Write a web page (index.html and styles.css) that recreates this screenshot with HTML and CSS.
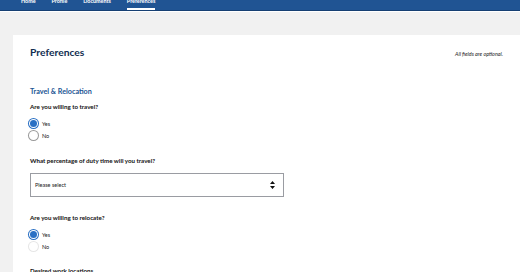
FILE: index.html
```html
<!DOCTYPE html>
<html>
<head>
<meta charset="utf-8">
<link rel="stylesheet" href="styles.css">
</head>
<body>
<nav class="topnav">
  <a class="tab">Home</a>
  <a class="tab">Profile</a>
  <a class="tab">Documents</a>
  <a class="tab active">Preferences</a>
</nav>
<main class="page">
  <section class="card">
    <header class="card-head">
      <h1 class="title">Preferences</h1>
      <p class="note">All fields are optional.</p>
    </header>
    <h2 class="section-title">Travel &amp; Relocation</h2>

    <div class="question q1">
      <p class="label">Are you willing to travel?</p>
      <div class="options">
        <label class="opt"><span class="radio checked"></span>Yes</label>
        <label class="opt"><span class="radio"></span>No</label>
      </div>
    </div>

    <div class="question q2">
      <p class="label">What percentage of duty time will you travel?</p>
      <div class="select">
        <span>Please select</span>
        <svg class="arrows" width="5" height="8" viewBox="0 0 5 8"><path d="M2.5 0 L5 3 L0 3 Z M2.5 8 L5 5 L0 5 Z" fill="#111"/></svg>
      </div>
    </div>

    <div class="question q3">
      <p class="label">Are you willing to relocate?</p>
      <div class="options">
        <label class="opt"><span class="radio checked"></span>Yes</label>
        <label class="opt"><span class="radio faint"></span>No</label>
      </div>
    </div>

    <div class="question q4">
      <p class="label">Desired work locations</p>
    </div>
  </section>
</main>
</body>
</html>
```
FILE: styles.css
```css
* { box-sizing: border-box; }
html, body { margin: 0; padding: 0; }
body {
  background: #f1f1f1;
  font-family: Lato, "Open Sans", sans-serif;
  color: #212121;
  width: 520px;
  height: 272px;
  overflow: hidden;
}
.topnav {
  height: 11px;
  background: #205493;
  border-bottom: 1px solid #163f73;
  box-shadow: 0 1px 0 #ffffff;
  display: flex;
  align-items: flex-end;
  padding-left: 21px;
  gap: 16px;
  overflow: hidden;
}
.tab {
  color: #fff;
  font-size: 5.4px;
  font-weight: 700;
  line-height: 7px;
  padding-bottom: 5px;
  position: relative;
}
.tab.active::after {
  content: "";
  position: absolute;
  left: 0;
  right: 0;
  bottom: 0;
  height: 2px;
  background: #fff;
}
.page {
  padding: 24px 0 0 13px;
}
.card {
  background: #fff;
  padding: 10px 17px 0 17px;
  height: 300px;
}
.card-head {
  display: flex;
  justify-content: space-between;
  align-items: baseline;
  height: 14px;
}
.title {
  margin: 0;
  font-size: 10.3px;
  line-height: 14px;
  font-weight: 700;
  color: #112e51;
}
.note {
  margin: 0;
  font-size: 5.4px;
  font-style: italic;
  color: #212121;
}
.section-title {
  margin: 28px 0 0;
  font-size: 7.2px;
  line-height: 10px;
  font-weight: 700;
  color: #205493;
}
.q1 { margin-top: 6px; }
.q2 { margin-top: 17px; }
.q3 { margin-top: 17px; }
.q4 { margin-top: 16px; }
.label {
  margin: 0;
  font-size: 6.2px;
  line-height: 8px;
  font-weight: 700;
  color: #111;
}
.options {
  display: flex;
  flex-direction: column;
  gap: 3px;
  margin-top: 8px;
}
.opt {
  display: flex;
  align-items: center;
  gap: 4px;
  height: 9px;
  font-size: 5.5px;
  color: #212121;
  margin-left: -1px;
}
.radio {
  width: 9px;
  height: 9px;
  border-radius: 50%;
  background: #fff;
  box-shadow: 0 0 0 1px #9a9a9a;
}
.radio.checked {
  background: #2a70c4;
  box-shadow: 0 0 0 1px #2a70c4, inset 0 0 0 1px #fff;
}
.radio.faint { box-shadow: 0 0 0 1px #e6e6e6; }
.select {
  margin-top: 8px;
  width: 254px;
  height: 24px;
  border: 1px solid #9a9ca2;
  display: flex;
  align-items: center;
  justify-content: space-between;
  padding: 0 8px 0 4px;
  font-size: 5.5px;
  color: #212121;
}
.arrows { display: block; }
```
